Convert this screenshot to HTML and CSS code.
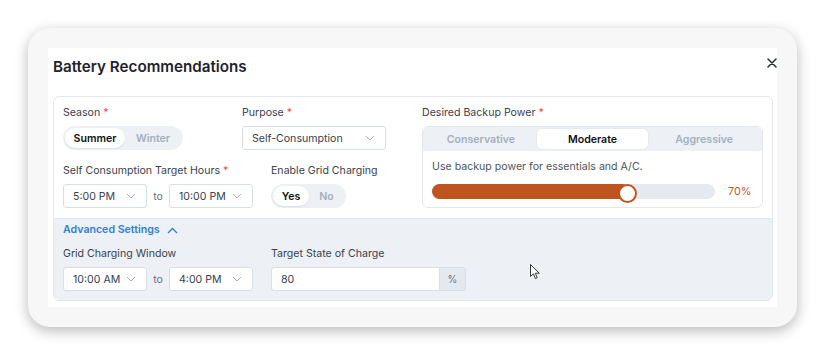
FILE: index.html
```html
<!DOCTYPE html>
<html lang="en">
<head>
    <meta charset="UTF-8">
    <title>Battery Recommendations</title>
    <link rel="stylesheet" href="styles.css">
</head>
<body>

    <div class="frame">
        <div class="modal">
            <div class="modal-head">
                <h2>Battery Recommendations</h2>
                <button class="close" type="button">
                    <svg width="10" height="10" viewBox="0 0 10 10"><path d="M1 1 L9 9 M9 1 L1 9" stroke="#2d3340" stroke-width="1.6" stroke-linecap="round"/></svg>
                </button>
            </div>

            <div class="card">
                <div class="main">
                    <div class="left">
                        <div class="row">
                            <div class="field season">
                                <label>Season <span class="req">*</span></label>
                                <div class="seg seg-season">
                                    <span class="opt active">Summer</span>
                                    <span class="opt">Winter</span>
                                </div>
                            </div>
                            <div class="field">
                                <label>Purpose <span class="req">*</span></label>
                                <div class="select purpose">
                                    <span>Self-Consumption</span>
                                    <svg class="chev" width="10" height="6" viewBox="0 0 10 6"><path d="M1 1 L5 5 L9 1" fill="none" stroke="#a3adbb" stroke-width="1"/></svg>
                                </div>
                            </div>
                        </div>
                        <div class="row row-2">
                            <div class="field hours">
                                <label>Self Consumption Target Hours <span class="req">*</span></label>
                                <div class="range">
                                    <div class="select time">
                                        <span>5:00 PM</span>
                                        <svg class="chev" width="10" height="6" viewBox="0 0 10 6"><path d="M1 1 L5 5 L9 1" fill="none" stroke="#a3adbb" stroke-width="1"/></svg>
                                    </div>
                                    <span class="to">to</span>
                                    <div class="select time">
                                        <span>10:00 PM</span>
                                        <svg class="chev" width="10" height="6" viewBox="0 0 10 6"><path d="M1 1 L5 5 L9 1" fill="none" stroke="#a3adbb" stroke-width="1"/></svg>
                                    </div>
                                </div>
                            </div>
                            <div class="field">
                                <label>Enable Grid Charging</label>
                                <div class="seg seg-grid">
                                    <span class="opt active">Yes</span>
                                    <span class="opt">No</span>
                                </div>
                            </div>
                        </div>
                    </div>

                    <div class="field right">
                        <label>Desired Backup Power <span class="req">*</span></label>
                        <div class="backup">
                            <div class="tabs">
                                <span class="tab">Conservative</span>
                                <span class="tab active">Moderate</span>
                                <span class="tab">Aggressive</span>
                            </div>
                            <div class="backup-body">
                                <p class="desc">Use backup power for essentials and A/C.</p>
                                <div class="slider">
                                    <div class="track">
                                        <div class="fill" style="width: 70%"></div>
                                    </div>
                                    <span class="pct">70%</span>
                                </div>
                            </div>
                        </div>
                    </div>
                </div>

                <div class="advanced">
                    <button class="adv-toggle" type="button">
                        Advanced Settings
                        <svg width="11" height="7" viewBox="0 0 11 7"><path d="M1 6 L5.5 1.5 L10 6" fill="none" stroke="#2f80d1" stroke-width="1.4"/></svg>
                    </button>
                    <div class="row adv-row">
                        <div class="field hours">
                            <label>Grid Charging Window</label>
                            <div class="range">
                                <div class="select time">
                                    <span>10:00 AM</span>
                                    <svg class="chev" width="10" height="6" viewBox="0 0 10 6"><path d="M1 1 L5 5 L9 1" fill="none" stroke="#a3adbb" stroke-width="1"/></svg>
                                </div>
                                <span class="to">to</span>
                                <div class="select time">
                                    <span>4:00 PM</span>
                                    <svg class="chev" width="10" height="6" viewBox="0 0 10 6"><path d="M1 1 L5 5 L9 1" fill="none" stroke="#a3adbb" stroke-width="1"/></svg>
                                </div>
                            </div>
                        </div>
                        <div class="field">
                            <label>Target State of Charge</label>
                            <div class="input-group">
                                <span class="input">80</span>
                                <span class="addon">%</span>
                            </div>
                        </div>
                    </div>
                </div>
            </div>
        </div>

        <svg class="cursor" width="11" height="16" viewBox="0 0 11 16"><path d="M0.5 0.5 L0.5 12.5 L3.4 9.8 L5.4 14.6 L7.2 13.8 L5.3 9.2 L9.3 9.2 Z" fill="#fff" stroke="#222" stroke-width="0.9" stroke-linejoin="round"/></svg>
    </div>

</body>
</html>
```

FILE: styles.css
```css
* {
    margin: 0;
    padding: 0;
    box-sizing: border-box;
}
body {
    font-family: Inter, "Liberation Sans", sans-serif;
    background-color: #fff;
    color: #374151;
}
.frame {
    position: relative;
    width: 769px;
    margin: 28px;
    padding: 20px;
    background-color: #f7f7f7;
    border-radius: 22px;
    box-shadow: 0 4px 14px rgba(0, 0, 0, 0.28);
}
.modal {
    background-color: #fff;
    padding: 9px 0 6px 5px;
}
.modal-head {
    display: flex;
    justify-content: space-between;
    align-items: flex-start;
    margin-bottom: 19px;
}
.modal-head h2 {
    font-size: 15.2px;
    line-height: 20px;
    font-weight: 600;
    color: #1e2330;
}
.close {
    background: none;
    border: none;
    width: 10px;
    height: 10px;
    margin-top: 1px;
    display: flex;
}
.card {
    width: 720px;
    border: 1px solid #e2e7ee;
    border-radius: 6px;
    overflow: hidden;
}
.main {
    display: flex;
    padding: 8px 9px 10px 9px;
}
.left {
    width: 359px;
}
.row {
    display: flex;
}
.row-2 {
    margin-top: 13px;
}
.field label {
    display: block;
    font-size: 10.6px;
    line-height: 16px;
    color: #3a4150;
    margin-bottom: 5px;
}
.req {
    color: #e5484d;
}
.season {
    width: 179px;
}
.hours {
    width: 208px;
}
.right {
    flex: 1;
}

/* segmented toggles */
.seg {
    display: flex;
    height: 24px;
    padding: 2px;
    background-color: #edf1f5;
    border-radius: 12px;
    font-size: 10.6px;
    font-weight: 600;
}
.seg .opt {
    display: flex;
    align-items: center;
    justify-content: center;
    color: #a3afbf;
    border-radius: 10px;
}
.seg .opt.active {
    background-color: #fff;
    color: #111;
    box-shadow: 0 1px 2px rgba(0, 0, 0, 0.08);
}
.seg-season {
    width: 120px;
}
.seg-season .opt {
    width: 60px;
}
.seg-season .opt:last-child {
    width: 56px;
}
.seg-grid {
    width: 75px;
}
.seg-grid .opt {
    width: 36px;
}
.seg-grid .opt:last-child {
    width: 35px;
}

/* selects */
.select {
    display: flex;
    align-items: center;
    justify-content: space-between;
    height: 24px;
    padding: 0 10px 0 9px;
    background-color: #fff;
    border: 1px solid #d8dee7;
    border-radius: 3px;
    font-size: 10.6px;
    color: #374151;
}
.purpose {
    width: 144px;
}
.time {
    width: 84px;
}
.range {
    display: flex;
    align-items: center;
}
.to {
    width: 22px;
    text-align: center;
    font-size: 10.6px;
    color: #6b7280;
}

/* backup power */
.backup {
    border: 1px solid #e2e7ee;
    border-radius: 6px;
    overflow: hidden;
}
.tabs {
    display: flex;
    height: 24px;
    padding: 2px;
    background-color: #edf1f6;
}
.tab {
    flex: 1;
    display: flex;
    align-items: center;
    justify-content: center;
    font-size: 10.6px;
    font-weight: 600;
    color: #a3afbf;
    border-radius: 5px;
}
.tab.active {
    background-color: #fff;
    color: #111;
    box-shadow: 0 0 0 1px #e6ebf1;
}
.backup-body {
    padding: 8px 9px;
}
.desc {
    font-size: 10.6px;
    line-height: 16px;
    color: #4b5563;
    margin-bottom: 9px;
}
.slider {
    display: flex;
    align-items: center;
    gap: 13px;
}
.track {
    flex: 1;
    height: 15px;
    background-color: #e6eaf0;
    border-radius: 8px;
}
.fill {
    position: relative;
    height: 15px;
    background-color: #c0541f;
    border-radius: 8px;
}
.fill::after {
    content: "";
    position: absolute;
    right: -7px;
    top: 0;
    width: 15px;
    height: 15px;
    border: 2px solid #c0541f;
    border-radius: 50%;
    background-color: #fff;
}
.pct {
    width: 25px;
    font-size: 10.8px;
    color: #c05a33;
}

/* advanced */
.advanced {
    background-color: #edf1f6;
    border-top: 1px solid #e2e7ee;
    padding: 3px 9px 9px 9px;
}
.adv-toggle {
    display: flex;
    align-items: center;
    gap: 7px;
    background: none;
    border: none;
    font-family: inherit;
    font-size: 10.6px;
    line-height: 16px;
    font-weight: 600;
    color: #2f80d1;
}
.adv-row {
    margin-top: 8px;
}
.input-group {
    display: flex;
    height: 24px;
}
.input {
    display: flex;
    align-items: center;
    width: 168px;
    padding-left: 9px;
    background-color: #fff;
    border: 1px solid #d8dee7;
    border-right: none;
    border-radius: 3px 0 0 3px;
    font-size: 10.6px;
    color: #374151;
}
.addon {
    display: flex;
    align-items: center;
    justify-content: center;
    width: 27px;
    background-color: #e4e9f0;
    border: 1px solid #d8dee7;
    border-radius: 0 3px 3px 0;
    font-size: 10px;
    color: #6b7280;
}
.cursor {
    position: absolute;
    left: 502px;
    top: 236px;
}
```
